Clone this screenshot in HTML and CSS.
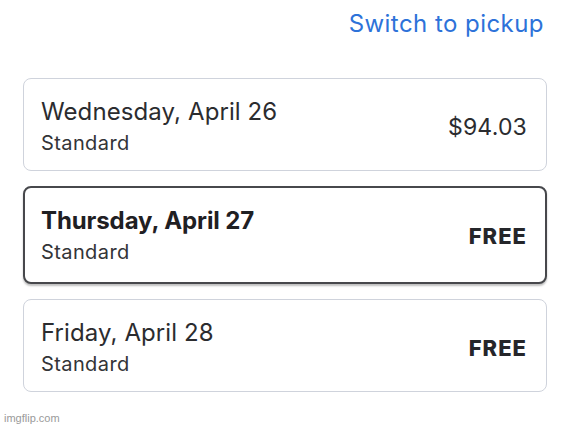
FILE: index.html
```html
<!DOCTYPE html>
<html lang="en">
<head>
<meta charset="utf-8">
<title>Delivery options</title>
<link rel="stylesheet" href="styles.css">
</head>
<body>
<main class="page">
  <div class="top-row">
    <a class="switch-link" href="#">Switch to pickup</a>
  </div>
  <ul class="options">
    <li class="option">
      <div class="option-text">
        <div class="option-date">Wednesday, April 26</div>
        <div class="option-type">Standard</div>
      </div>
      <div class="option-price">$94.03</div>
    </li>
    <li class="option option-selected">
      <div class="option-text">
        <div class="option-date">Thursday, April 27</div>
        <div class="option-type">Standard</div>
      </div>
      <div class="option-price option-free">FREE</div>
    </li>
    <li class="option">
      <div class="option-text">
        <div class="option-date">Friday, April 28</div>
        <div class="option-type">Standard</div>
      </div>
      <div class="option-price option-free">FREE</div>
    </li>
  </ul>
</main>
<div class="watermark">imgflip.com</div>
</body>
</html>
```
FILE: styles.css
```css
html, body {
  margin: 0;
  padding: 0;
  background: #ffffff;
}

body {
  font-family: Inter, "Liberation Sans", Arial, sans-serif;
  color: #2e2f32;
  width: 583px;
  height: 428px;
  position: relative;
  overflow: hidden;
}

.page {
  padding: 10px 36px 0 23px;
}

.top-row {
  display: flex;
  justify-content: flex-end;
  padding-right: 3px;
}

.switch-link {
  font-size: 24px;
  line-height: 28px;
  color: #2d72d9;
  text-decoration: none;
  letter-spacing: 0.45px;
}

.options {
  list-style: none;
  margin: 40px 0 0 0;
  padding: 0;
  display: flex;
  flex-direction: column;
  gap: 15px;
}

.option {
  display: flex;
  align-items: center;
  justify-content: space-between;
  border: 1px solid #cfd3dc;
  border-radius: 8px;
  padding: 19px 19px 15px 17px;
  background: #fff;
}

.option-selected {
  border: 2px solid #47484c;
  padding: 19px 18px 18px 16px;
  box-shadow: 0 2px 2px rgba(0, 0, 0, 0.25);
}

.option-text {
  display: flex;
  flex-direction: column;
  gap: 5px;
}

.option-date {
  font-size: 24px;
  line-height: 28px;
  color: #2b2c2f;
  letter-spacing: 0.1px;
}

.option-selected .option-date {
  font-weight: 700;
  color: #1f2023;
  letter-spacing: -0.1px;
}

.option-type {
  font-size: 20px;
  line-height: 24px;
  color: #333437;
  letter-spacing: 0.4px;
}

.option-price {
  font-size: 23px;
  line-height: 28px;
  color: #2b2c2f;
  letter-spacing: 0.2px;
}

.option-free {
  font-weight: 800;
  font-size: 22px;
  color: #25262a;
  letter-spacing: 1px;
}

.watermark {
  position: absolute;
  left: 4px;
  bottom: 3px;
  font-family: "Liberation Sans", Arial, sans-serif;
  font-size: 11px;
  line-height: 13px;
  color: #9a9a9a;
}
```
